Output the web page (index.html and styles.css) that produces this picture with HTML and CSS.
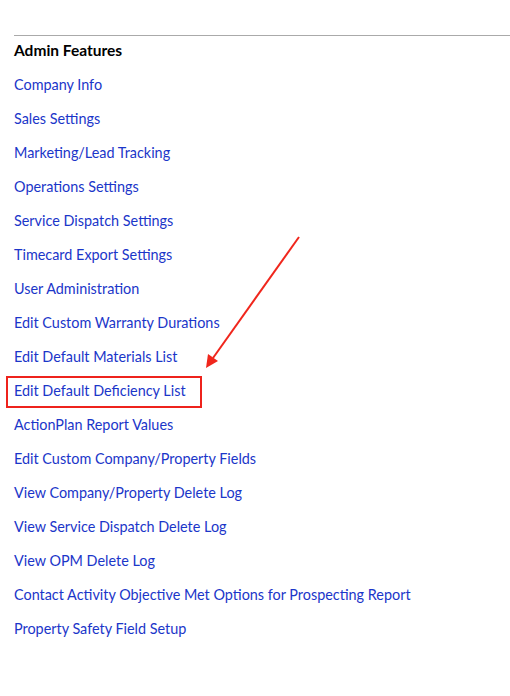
FILE: index.html
```html
<!DOCTYPE html>
<html>
<head>
<meta charset="utf-8">
<link rel="stylesheet" href="styles.css">
</head>
<body>
<div class="page">
  <hr class="rule">
  <h2 class="title">Admin Features</h2>
  <ul class="links">
    <li><a href="#">Company Info</a></li>
    <li><a href="#">Sales Settings</a></li>
    <li><a href="#">Marketing/Lead Tracking</a></li>
    <li><a href="#">Operations Settings</a></li>
    <li><a href="#">Service Dispatch Settings</a></li>
    <li><a href="#">Timecard Export Settings</a></li>
    <li><a href="#">User Administration</a></li>
    <li><a href="#">Edit Custom Warranty Durations</a></li>
    <li><a href="#">Edit Default Materials List</a></li>
    <li class="marked"><a href="#">Edit Default Deficiency List</a></li>
    <li><a href="#">ActionPlan Report Values</a></li>
    <li><a href="#">Edit Custom Company/Property Fields</a></li>
    <li><a href="#">View Company/Property Delete Log</a></li>
    <li><a href="#">View Service Dispatch Delete Log</a></li>
    <li><a href="#">View OPM Delete Log</a></li>
    <li><a href="#">Contact Activity Objective Met Options for Prospecting Report</a></li>
    <li><a href="#">Property Safety Field Setup</a></li>
  </ul>
  <svg class="arrow" width="510" height="696" viewBox="0 0 510 696">
    <line x1="299" y1="237" x2="213" y2="358" stroke="#f0261c" stroke-width="2"/>
    <polygon points="206,368 208,354 218,361" fill="#f0261c"/>
  </svg>
</div>
</body>
</html>
```

FILE: styles.css
```css
html, body {
  margin: 0;
  padding: 0;
  background: #fff;
}
.page {
  position: relative;
  width: 510px;
  height: 696px;
  padding: 35px 0 0 14px;
  box-sizing: border-box;
  font-family: Lato, "Open Sans", sans-serif;
}
.rule {
  margin: 0;
  border: 0;
  border-top: 1px solid #aaaaaa;
  height: 0;
}
.title {
  margin: 5px 0 0 0;
  font-size: 15.5px;
  line-height: 19px;
  font-weight: 700;
  color: #000;
}
.links {
  list-style: none;
  margin: 16px 0 0 0;
  padding: 0;
  display: flex;
  flex-direction: column;
  gap: 16px;
}
.links li {
  font-size: 14.4px;
  line-height: 18px;
  height: 18px;
}
.links a {
  color: #1b36c9;
  text-decoration: none;
}
.marked {
  position: relative;
}
.marked::before {
  content: "";
  position: absolute;
  left: -8px;
  top: -6px;
  width: 192px;
  height: 28px;
  border: 2px solid #ee231c;
}
.arrow {
  position: absolute;
  left: 0;
  top: 0;
  pointer-events: none;
}
```
